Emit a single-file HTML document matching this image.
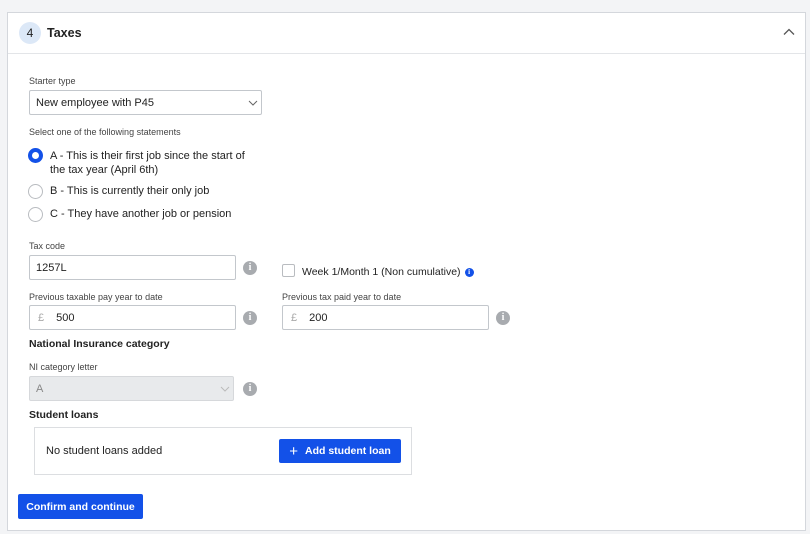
<!DOCTYPE html>
<html><head><style>
*{box-sizing:border-box;margin:0;padding:0}
body{width:810px;height:534px;background:#f3f4f6;font-family:"Liberation Sans",sans-serif;color:#222;position:relative;overflow:hidden}
.card{position:absolute;left:7px;top:12px;width:799px;height:519px;background:#fff;border:1px solid #d4d7dc}
.hdr{position:absolute;left:0;top:0;right:0;height:41px;border-bottom:1px solid #e3e5e8}
.a{position:absolute}
.lbl{font-size:9px;color:#444}
.inp{position:absolute;background:#fff;border:1px solid #c3c7cc;border-radius:2px;font-size:11px;padding-left:6px;display:flex;align-items:center}
.info{position:absolute;width:14px;height:14px;border-radius:50%;background:#a8abaf;color:#fff;font-size:10px;font-weight:bold;text-align:center;line-height:14px;font-family:"Liberation Serif",serif}
.radio{position:absolute;width:15px;height:15px;border-radius:50%;border:1px solid #b9bcc0;background:#fff}
.txt{position:absolute;font-size:11px;color:#222;white-space:nowrap}
.btn{position:absolute;background:#1351e8;color:#fff;font-size:11px;font-weight:bold;border-radius:2px;display:flex;align-items:center;justify-content:center}
</style></head><body>
<div class="card">
 <div class="hdr">
  <div class="a" style="left:11px;top:9px;width:22px;height:22px;border-radius:50%;background:#dce8f7;font-size:12px;text-align:center;line-height:22px">4</div>
  <div class="a" style="left:39px;top:13px;font-size:12.5px;font-weight:bold">Taxes</div>
  <svg class="a" style="left:775px;top:15px" width="12" height="8" viewBox="0 0 12 8"><path d="M1 6.5L6 1.5L11 6.5" fill="none" stroke="#555" stroke-width="1.3"/></svg>
 </div>
</div>
<div class="a lbl" style="left:29px;top:76px">Starter type</div>
<div class="inp" style="left:29px;top:90px;width:233px;height:25px">New employee with P45
 <svg class="a" style="left:218px;top:9px" width="10" height="6" viewBox="0 0 10 6"><path d="M1 1L5 5L9 1" fill="none" stroke="#666" stroke-width="1"/></svg></div>
<div class="a lbl" style="left:29px;top:127px">Select one of the following statements</div>
<div class="radio" style="left:28px;top:148px;border:4px solid #1351e8"></div>
<div class="txt" style="left:50px;top:149px;line-height:14px">A - This is their first job since the start of<br>the tax year (April 6th)</div>
<div class="radio" style="left:28px;top:184px"></div>
<div class="txt" style="left:50px;top:185px">B - This is currently their only job</div>
<div class="radio" style="left:28px;top:207px"></div>
<div class="txt" style="left:50px;top:208px">C - They have another job or pension</div>

<div class="a lbl" style="left:29px;top:241px">Tax code</div>
<div class="inp" style="left:29px;top:255px;width:207px;height:25px">1257L</div>
<div class="info" style="left:243px;top:261px">i</div>
<div class="a" style="left:282px;top:264px;width:13px;height:13px;border:1px solid #b9bcc0;border-radius:2px"></div>
<div class="txt" style="left:302px;top:266px;font-size:10.5px;display:flex;align-items:center">Week 1/Month 1 (Non cumulative)<span style="display:inline-block;margin-left:4px;width:9px;height:9px;border-radius:50%;background:#1351e8;color:#fff;font-size:7px;line-height:9px;text-align:center;font-weight:bold;font-family:'Liberation Serif',serif">i</span></div>

<div class="a lbl" style="left:29px;top:292px">Previous taxable pay year to date</div>
<div class="inp" style="left:29px;top:305px;width:207px;height:25px"><span style="color:#aaa;margin-right:12px;margin-left:2px">£</span>500</div>
<div class="info" style="left:243px;top:311px">i</div>
<div class="a lbl" style="left:282px;top:292px">Previous tax paid year to date</div>
<div class="inp" style="left:282px;top:305px;width:207px;height:25px"><span style="color:#aaa;margin-right:12px;margin-left:2px">£</span>200</div>
<div class="info" style="left:496px;top:311px">i</div>

<div class="a" style="left:29px;top:338px;font-size:10.5px;font-weight:bold">National Insurance category</div>
<div class="a lbl" style="left:29px;top:362px">NI category letter</div>
<div class="inp" style="left:29px;top:376px;width:205px;height:25px;background:#e8eaec;border-color:#d6d8db;color:#888">A
 <svg class="a" style="left:190px;top:9px" width="10" height="6" viewBox="0 0 10 6"><path d="M1 1L5 5L9 1" fill="none" stroke="#bbb" stroke-width="1"/></svg></div>
<div class="info" style="left:243px;top:382px">i</div>

<div class="a" style="left:29px;top:409px;font-size:10.5px;font-weight:bold">Student loans</div>
<div class="a" style="left:34px;top:427px;width:378px;height:48px;border:1px solid #dcdee1"></div>
<div class="txt" style="left:46px;top:445px">No student loans added</div>
<div class="btn" style="left:279px;top:439px;width:122px;height:24px;font-size:10.5px"><span style="font-size:15px;font-weight:normal;margin-right:7px">+</span>Add student loan</div>
<div class="btn" style="left:18px;top:494px;width:125px;height:25px;font-size:10.5px">Confirm and continue</div>
</body></html>
